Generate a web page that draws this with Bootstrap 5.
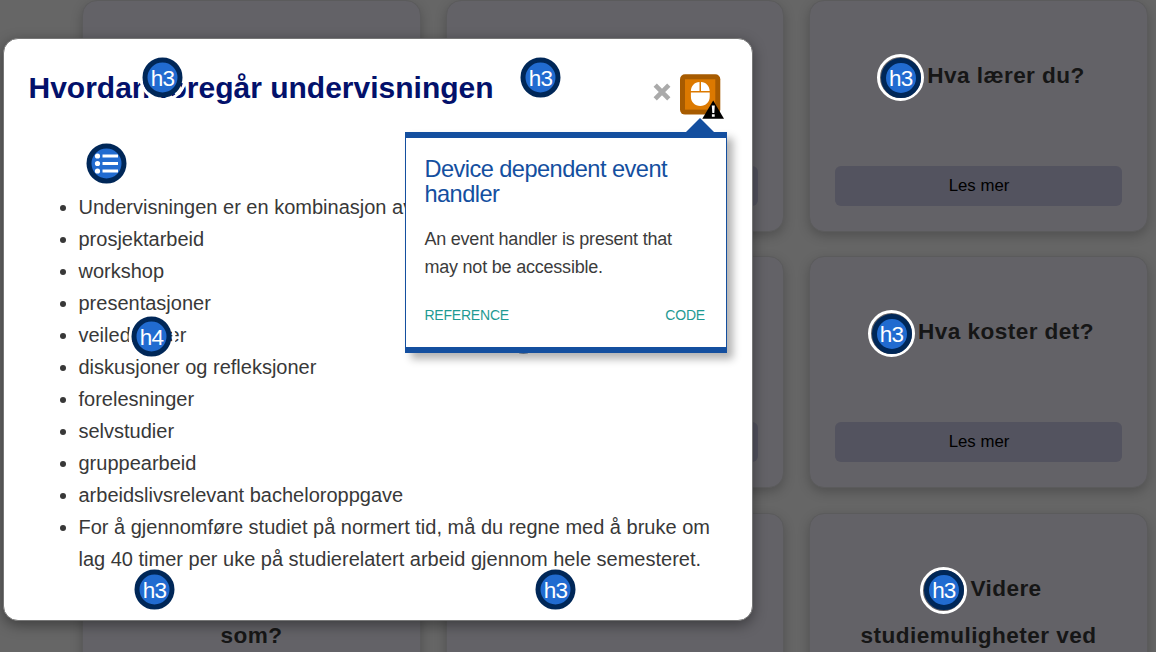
<!DOCTYPE html>
<html lang="no">
<head>
<meta charset="utf-8">
<meta name="viewport" content="width=device-width, initial-scale=1">
<title>Hvordan foregår undervisningen</title>
<link href="https://cdn.jsdelivr.net/npm/bootstrap@5.3.0/dist/css/bootstrap.min.css" rel="stylesheet">
<style>
body{font-family:"Liberation Sans",Arial,sans-serif;background:#666;height:652px}
.info-grid{display:grid;grid-template-columns:339px 338px 339px;grid-auto-rows:232px;column-gap:25px;row-gap:24.4px;padding-left:82px;width:1156px;height:652px;overflow:hidden}
.info-card{background:#636267;border:1px solid #5b5b5c;border-radius:15px;box-shadow:0 4px 12px rgba(0,0,0,.22);padding:51px 25px 25px}
.info-card h3{font-size:22.6px;letter-spacing:.43px;line-height:47px;font-weight:700;color:#161616;text-align:center;margin:0}
.more-btn{background:#53535f;border:0;border-radius:6px;height:40px;font-size:16.8px;line-height:38px;color:#000;padding:0 0 0 1px;width:100%}
.tag{display:inline-flex;align-items:center;justify-content:center;width:47px;height:47px;border-radius:50%;border:3.5px solid #fff;vertical-align:top}
.tag>span{display:flex;align-items:center;justify-content:center;width:40px;height:40px;flex:none;border-radius:50%;background:#216bd0;border:5px solid #002758;color:#fff;font-size:22.5px;line-height:30px;font-weight:400;letter-spacing:-.8px;padding:2px 0 0 0}
.info-card .tag{margin:2px 3px -5px 5px}
.pin{position:absolute;transform:translate(-50%,-50%)}
.dialog-box{left:3px;top:38px;width:750px;height:583px;background:#fff;border:1px solid #777;border-radius:15px;box-shadow:0 4px 14px rgba(0,0,0,.4);color:#383838;padding:32px 24px 0 24px}
.dialog-box h2{font-size:30px;line-height:34px;font-weight:700;color:#03116b;margin:0 0 0 .5px}
.dialog-box ul{font-size:20px;line-height:32px;padding-left:50.5px;margin:86px 0 0}
.tip{left:405px;top:132px;width:322px;height:221px;background:#fff;border:solid #144f9f;border-width:6px 1px;box-shadow:6px 6px 8px rgba(0,0,0,.3);padding:19px 21px 0 18.4px}
.tip::before{content:"";position:absolute;right:11px;top:-20px;border:solid transparent;border-width:0 15px 15px;border-bottom-color:#144f9f}
.tip h4{font-size:23.6px;letter-spacing:-.54px;line-height:25px;color:#144f9f;font-weight:400;margin:0 0 18px}
.tip p{font-size:18px;letter-spacing:-.21px;line-height:28px;color:#3c3c3c;margin:0 0 23px}
.tip a{font-size:14px;letter-spacing:-.2px;line-height:22px;color:#1f9a93;text-decoration:none}
</style>
</head>
<body class="position-relative overflow-hidden m-0">
<main class="info-grid">
  <section class="info-card"></section>
  <section class="info-card d-flex flex-column justify-content-end"><button class="more-btn" aria-label="Les mer"></button></section>
  <section class="info-card d-flex flex-column justify-content-between"><h3><span class="tag"><span>h3</span></span>Hva lærer du?</h3><button class="more-btn">Les mer</button></section>
  <section class="info-card"></section>
  <section class="info-card d-flex flex-column justify-content-end"><button class="more-btn" aria-label="Les mer"></button></section>
  <section class="info-card d-flex flex-column justify-content-between"><h3><span class="tag"><span>h3</span></span>Hva koster det?</h3><button class="more-btn">Les mer</button></section>
  <section class="info-card"><h3>&nbsp;<br>som?</h3></section>
  <section class="info-card"></section>
  <section class="info-card"><h3><span class="tag"><span>h3</span></span>Videre<br>studiemuligheter ved</h3></section>
</main>

<article class="dialog-box position-absolute">
  <div class="d-flex justify-content-between">
    <h2>Hvordan foregår undervisningen</h2>
    <div class="d-flex">
      <svg width="18" height="18" viewBox="0 0 18 18" style="margin:12px 9px 0 0"><path d="M2.2 2.2l13.6 13.6M15.8 2.2L2.2 15.8" stroke="#aaa" stroke-width="4.6"/></svg>
      <svg width="44" height="46" viewBox="0 0 44 46" style="margin:3px 4.5px -15px 0"><rect y=".3" width="40.3" height="40.3" rx="5" fill="#a75b00"/><rect x="5" y="5.300" width="30.3" height="30.3" fill="#dc7900"/><path d="M19.500 8v9h-8.600c.2-5.200 3.600-8.700 8.600-9zm1.500 0c5 .3 8.500 3.800 8.700 9H21zM10.900 18.500h18.800v4.200c0 5.400-3.900 9.200-9.400 9.200s-9.400-3.800-9.400-9.200z" fill="#fff"/><path d="M33.200 26.500L44 44.800H22.300z" fill="#000"/><path d="M31.800 31.500h3l-.5 7.500h-2zM31.900 40.200h2.800v2.500h-2.800z" fill="#fff"/></svg>
    </div>
  </div>
  <ul>
    <li>Undervisningen er en kombinasjon av</li>
    <li>prosjektarbeid</li>
    <li>workshop</li>
    <li>presentasjoner</li>
    <li>veiledninger</li>
    <li>diskusjoner og refleksjoner</li>
    <li>forelesninger</li>
    <li>selvstudier</li>
    <li>gruppearbeid</li>
    <li>arbeidslivsrelevant bacheloroppgave</li>
    <li>For å gjennomføre studiet på normert tid, må du regne med å bruke om lag 40 timer per uke på studierelatert arbeid gjennom hele semesteret.</li>
  </ul>
</article>

<span class="tag pin" style="left:162.500px;top:77.500px"><span>h3</span></span>
<span class="tag pin" style="left:540.500px;top:77.500px"><span>h3</span></span>
<span class="tag pin" style="left:106.500px;top:163.500px"><span style="padding:0"><svg width="30" height="30" viewBox="0 0 30 30"><g fill="#fff"><circle cx="6" cy="7.500" r="2.600"/><circle cx="6" cy="15" r="2.600"/><circle cx="6" cy="22.500" r="2.600"/><path d="M11 6.100h15.500v2.800H11zM11 13.600h15.500v2.800H11zM11 21.100h15.500v2.800H11z"/></g></svg></span></span>
<span class="tag pin" style="left:151.500px;top:336.500px"><span>h4</span></span>
<span class="tag pin" style="left:523.500px;top:333.500px"><span></span></span>
<span class="tag pin" style="left:154.500px;top:589.500px"><span>h3</span></span>
<span class="tag pin" style="left:555.500px;top:589.500px"><span>h3</span></span>

<aside class="tip position-absolute">
  <h4>Device dependent event handler</h4>
  <p>An event handler is present that may not be accessible.</p>
  <div class="d-flex justify-content-between"><a href="#">REFERENCE</a><a href="#">CODE</a></div>
</aside>
<script src="https://cdn.jsdelivr.net/npm/bootstrap@5.3.0/dist/js/bootstrap.bundle.min.js"></script>
</body>
</html>
